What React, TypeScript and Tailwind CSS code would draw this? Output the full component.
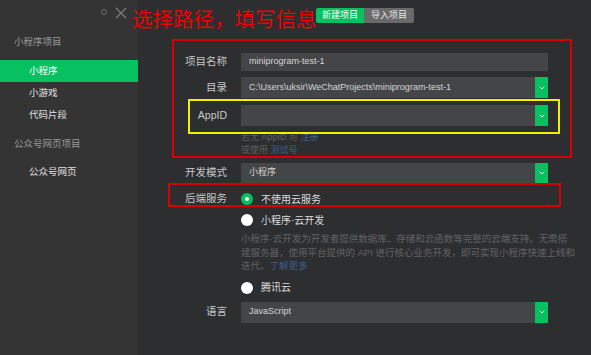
import { ChevronDown } from 'lucide-react'

const font = { fontFamily: '"Liberation Sans", "Noto Sans CJK SC", sans-serif' }

const projects = [
  { title: '小程序项目', items: ['小程序', '小游戏', '代码片段'] },
  { title: '公众号网页项目', items: ['公众号网页'] },
]

function Select({ value, h, arrow = true }: { value: string; h: string; arrow?: boolean }) {
  return (
    <div className={`flex w-[307px] items-stretch bg-[#444546] ${h}`}>
      <div className="flex flex-1 items-center pl-[8px] text-[9px] text-[#d6d6d6]">{value}</div>
      {arrow && (
        <div className="flex w-[13px] items-center justify-center bg-[#07c160]">
          <ChevronDown className="h-[8px] w-[8px] text-white" strokeWidth={3} />
        </div>
      )}
    </div>
  )
}

function Row({ label, children, className = '' }: { label: string; children: React.ReactNode; className?: string }) {
  return (
    <div className={`flex items-center ${className}`}>
      <div className="w-[89px] text-right text-[10.5px] text-[#c9c9c9]">{label}</div>
      <div className="ml-[14px]">{children}</div>
    </div>
  )
}

function Radio({ checked, label }: { checked?: boolean; label: string }) {
  return (
    <div className="flex items-center gap-[8px]">
      {checked ? (
        <span className="flex h-[12px] w-[12px] items-center justify-center rounded-full bg-[#07c160]">
          <span className="h-[4px] w-[4px] rounded-full bg-white" />
        </span>
      ) : (
        <span className="h-[12px] w-[12px] rounded-full bg-white" />
      )}
      <span className="text-[10px] text-[#dcdcdc]">{label}</span>
    </div>
  )
}

export default function App() {
  return (
    <div className="relative flex h-[355px] w-[591px] overflow-hidden bg-[#2d2e30]" style={font}>
      {/* sidebar */}
      <div className="relative w-[138px] shrink-0 bg-[#343434] pt-[31px]">
        <div className="absolute left-[101px] top-[9px] h-[6px] w-[6px] rounded-full border border-[#6f6f6f]" />
        <svg className="absolute left-[115px] top-[7px]" width="12" height="12" viewBox="0 0 12 12">
          <path d="M1 1L11 11M11 1L1 11" stroke="#7a7a7a" strokeWidth="1.3" />
        </svg>
        {projects.map((group, gi) => (
          <div key={group.title} className={gi > 0 ? 'mt-[7px]' : ''}>
            <div className="h-[22px] pl-[14px] text-[9.5px] leading-[22px] text-[#9a9a9a]">{group.title}</div>
            <div className={gi === 0 ? 'mt-[7px]' : 'mt-[6px]'}>
              {group.items.map((item) => (
                <div
                  key={item}
                  className={`h-[22px] pl-[29px] text-[9.5px] leading-[22px] ${
                    item === '小程序' ? 'bg-[#07c160] text-white' : 'text-[#e2e2e2]'
                  }`}
                >
                  {item}
                </div>
              ))}
            </div>
          </div>
        ))}
      </div>

      {/* main */}
      <div className="flex-1 pt-[8px]">
        <div className="flex h-[15px] pl-[178px] text-[9px] leading-[15px]">
          <div className="w-[48px] rounded-l-[2px] bg-[#07c160] text-center text-white">新建项目</div>
          <div className="w-[50px] rounded-r-[2px] bg-[#6a6a6a] text-center text-[#e6e6e6]">导入项目</div>
        </div>

        <div className="mt-[30px] flex flex-col">
          <Row label="项目名称">
            <Select value="miniprogram-test-1" h="h-[18px]" arrow={false} />
          </Row>
          <Row label="目录" className="mt-[6px]">
            <Select value="C:\Users\uksir\WeChatProjects\miniprogram-test-1" h="h-[21px]" />
          </Row>
          <Row label="AppID" className="mt-[7px]">
            <Select value="" h="h-[21px]" />
          </Row>
          <div className="mt-[5px] pl-[103px] text-[9px] leading-[13px] text-[#5e5e5e]">
            <div>
              若无 AppID 可 <span className="text-[#3d5d8f]">注册</span>
            </div>
            <div>
              或使用 <span className="text-[#3d5d8f]">测试号</span>
            </div>
          </div>
          <Row label="开发模式" className="mt-[6px]">
            <Select value="小程序" h="h-[20px]" />
          </Row>
          <Row label="后端服务" className="mt-[6px] h-[20px]">
            <Radio checked label="不使用云服务" />
          </Row>
          <div className="mt-[1px] flex h-[20px] items-center pl-[103px]">
            <Radio label="小程序·云开发" />
          </div>
          <div className="mt-[2px] whitespace-nowrap pl-[103px] text-[9.5px] leading-[13.5px] text-[#626262]">
            小程序·云开发为开发者提供数据库、存储和云函数等完整的云端支持。无需搭
            <br />
            建服务器，使用平台提供的 API 进行核心业务开发，即可实现小程序快速上线和
            <br />
            迭代。<span className="text-[#3d5d8f]">了解更多</span>
          </div>
          <div className="mt-[5px] flex h-[20px] items-center pl-[103px]">
            <Radio label="腾讯云" />
          </div>
          <Row label="语言" className="mt-[4px]">
            <Select value="JavaScript" h="h-[21px]" />
          </Row>
        </div>
      </div>

      {/* annotations */}
      <div className="absolute left-[132px] top-[8px] text-[20.5px] leading-[24px] text-[#ee0000]">选择路径，填写信息</div>
      <div className="absolute left-[172px] top-[39px] h-[119px] w-[400px] border-2 border-[#d80000]" />
      <div className="absolute left-[188px] top-[99px] h-[35px] w-[372px] border-2 border-[#f0f000]" />
      <div className="absolute left-[168px] top-[183px] h-[24px] w-[393px] border-2 border-[#d80000]" />
    </div>
  )
}
